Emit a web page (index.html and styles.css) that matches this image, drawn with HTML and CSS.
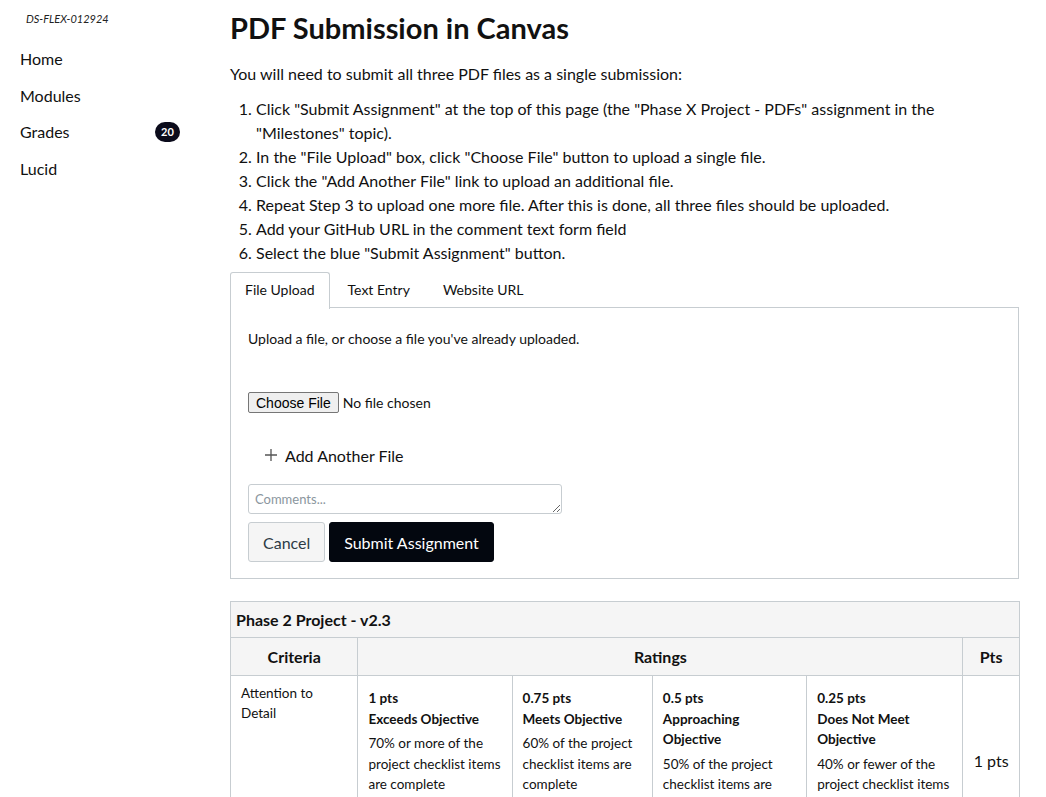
FILE: index.html
```html
<!DOCTYPE html>
<html>
<head>
<meta charset="utf-8">
<link rel="stylesheet" href="styles.css">
</head>
<body>
<div class="layout">
  <nav class="sidebar">
    <div class="course-code">DS-FLEX-012924</div>
    <ul class="nav">
      <li class="nav-item"><span>Home</span></li>
      <li class="nav-item"><span>Modules</span></li>
      <li class="nav-item"><span>Grades</span><span class="badge">20</span></li>
      <li class="nav-item"><span>Lucid</span></li>
    </ul>
  </nav>
  <main class="content">
    <h1 class="title">PDF Submission in Canvas</h1>
    <p class="intro">You will need to submit all three PDF files as a single submission:</p>
    <ol class="steps">
      <li>Click "Submit Assignment" at the top of this page (the "Phase X Project - PDFs" assignment in the "Milestones" topic).</li>
      <li>In the "File Upload" box, click "Choose File" button to upload a single file.</li>
      <li>Click the "Add Another File" link to upload an additional file.</li>
      <li>Repeat Step 3 to upload one more file. After this is done, all three files should be uploaded.</li>
      <li>Add your GitHub URL in the comment text form field</li>
      <li>Select the blue "Submit Assignment" button.</li>
    </ol>
    <div class="tabs">
      <div class="tab active">File Upload</div>
      <div class="tab">Text Entry</div>
      <div class="tab">Website URL</div>
    </div>
    <div class="panel">
      <p class="upload-note">Upload a file, or choose a file you've already uploaded.</p>
      <div class="file-row">
        <button class="file-btn">Choose File</button>
        <span class="file-none">No file chosen</span>
      </div>
      <div class="add-file">
        <svg class="plus" width="14" height="14" viewBox="0 0 14 14"><path d="M7 1v12M1 7h12" stroke="#555" stroke-width="1.3" fill="none"/></svg>
        <span>Add Another File</span>
      </div>
      <textarea class="comments" placeholder="Comments..."></textarea>
      <div class="actions">
        <button class="btn btn-cancel">Cancel</button>
        <button class="btn btn-submit">Submit Assignment</button>
      </div>
    </div>
    <table class="rubric">
      <tr><th class="rubric-title" colspan="6">Phase 2 Project - v2.3</th></tr>
      <tr class="head">
        <th class="col-criteria">Criteria</th>
        <th colspan="4">Ratings</th>
        <th class="col-pts">Pts</th>
      </tr>
      <tr class="row">
        <td class="crit">Attention to Detail</td>
        <td class="rating r1"><div class="rp">1 pts</div><div class="rn">Exceeds Objective</div><div class="rd">70% or more of the project checklist items are complete</div></td>
        <td class="rating r2"><div class="rp">0.75 pts</div><div class="rn">Meets Objective</div><div class="rd">60% of the project checklist items are complete</div></td>
        <td class="rating r3"><div class="rp">0.5 pts</div><div class="rn">Approaching Objective</div><div class="rd">50% of the project checklist items are complete</div></td>
        <td class="rating r4"><div class="rp">0.25 pts</div><div class="rn">Does Not Meet Objective</div><div class="rd">40% or fewer of the project checklist items are complete</div></td>
        <td class="pts">1 pts</td>
      </tr>
    </table>
  </main>
</div>
</body>
</html>
```
FILE: styles.css
```css
html, body {
  margin: 0;
  padding: 0;
  background: #fff;
  color: #2d3b45;
  font-family: Lato, "Noto Sans", sans-serif;
  height: 797px;
  overflow: hidden;
}
.layout {
  display: flex;
}
.sidebar {
  width: 230px;
  flex: none;
  padding: 11px 0 0 0;
  box-sizing: border-box;
}
.course-code {
  font-size: 11px;
  font-style: italic;
  color: #222;
  padding-left: 26px;
  line-height: 16px;
}
.nav {
  list-style: none;
  margin: 13px 0 0 0;
  padding: 0 0 0 20px;
}
.nav-item {
  display: flex;
  align-items: center;
  justify-content: space-between;
  width: 160px;
  height: 36.7px;
  font-size: 16px;
  color: #111;
}
.badge {
  background: #0b0b1b;
  color: #fff;
  font-size: 11px;
  font-weight: bold;
  border-radius: 11px;
  min-width: 25px;
  height: 20px;
  line-height: 20px;
  text-align: center;
}
.content {
  width: 789px;
  flex: none;
  color: #111;
}
.title {
  font-size: 29px;
  font-weight: 700;
  margin: 10px 0 0 0;
  line-height: 36px;
  color: #111;
}
.intro {
  font-size: 16px;
  line-height: 24px;
  margin: 16px 0 0 0;
}
.steps {
  font-size: 16px;
  line-height: 24px;
  margin: 11px 0 0 0;
  padding-left: 26px;
}
.tabs {
  display: flex;
  margin-top: 7px;
  height: 36px;
  position: relative;
  z-index: 1;
}
.tab {
  font-size: 14px;
  padding: 0 14px 0 14px;
  line-height: 34px;
  border: 1px solid transparent;
  border-bottom: none;
  color: #111;
  margin-right: 3px;
}
.tab.active {
  border-color: #c7cdd1;
  border-radius: 3px 3px 0 0;
  background: #fff;
  height: 36px;
}
.panel {
  border: 1px solid #c7cdd1;
  margin-top: -1px;
  padding: 22px 17px 16px 17px;
  height: 272px;
  box-sizing: border-box;
}
.upload-note {
  font-size: 14px;
  margin: 0;
  line-height: 18px;
}
.file-row {
  margin-top: 44px;
  display: flex;
  align-items: center;
  height: 21px;
}
.file-btn {
  font-family: "Liberation Sans", Arial, sans-serif;
  font-size: 14px;
  padding: 0 7px;
  height: 21px;
  background: #efefef;
  border: 1px solid #767676;
  border-radius: 2px;
  color: #000;
  margin: 0 4px 0 0;
}
.file-none {
  font-size: 14px;
  color: #111;
}
.add-file {
  display: flex;
  align-items: center;
  gap: 7px;
  margin-top: 31px;
  padding-left: 16px;
  font-size: 16px;
  height: 22px;
}
.plus {
  display: block;
}
.comments {
  display: block;
  margin-top: 18px;
  width: 314px;
  height: 30px;
  box-sizing: border-box;
  border: 1px solid #c7cdd1;
  border-radius: 3px;
  font-family: Lato, sans-serif;
  font-size: 13px;
  padding: 6px 6px;
  resize: vertical;
}
.comments::placeholder {
  color: #8b969e;
}
.actions {
  display: flex;
  gap: 4px;
  margin-top: 8px;
}
.btn {
  font-family: Lato, sans-serif;
  font-size: 16px;
  height: 40px;
  border-radius: 3px;
  padding: 0 14px;
}
.btn-cancel {
  background: #f5f5f5;
  border: 1px solid #c7cdd1;
  color: #2d3b45;
  width: 77px;
}
.btn-submit {
  background: #03070f;
  border: 1px solid #03070f;
  color: #fff;
  width: 165px;
}
.rubric {
  margin-top: 22px;
  width: 790px;
  border-collapse: collapse;
  font-size: 13.5px;
  color: #111;
}
.rubric th, .rubric td {
  border: 1px solid #c7cdd1;
}
.rubric-title {
  background: #f5f5f5;
  text-align: left;
  font-size: 16px;
  font-weight: 700;
  height: 35px;
  padding: 0 5px;
}
.head th {
  background: #f5f5f5;
  font-size: 16px;
  font-weight: 700;
  height: 37px;
  padding: 0;
  line-height: 35px;
}
.col-criteria {
  width: 127px;
}
.col-pts {
  width: 56px;
}
.crit {
  vertical-align: top;
  padding: 7px 10px;
  line-height: 20px;
  font-size: 13.5px;
}
.rating {
  vertical-align: top;
  padding: 12px 10px 29px 10px;
  line-height: 20.5px;
}
.r1 { width: 134px; }
.r2 { width: 120px; }
.r3 { width: 134px; }
.r4 { width: 136px; }
.rp, .rn {
  font-weight: 700;
  font-size: 13.5px;
}
.rd {
  margin-top: 4px;
  font-size: 13.5px;
}
.pts {
  text-align: center;
  font-size: 16px;
}
```
